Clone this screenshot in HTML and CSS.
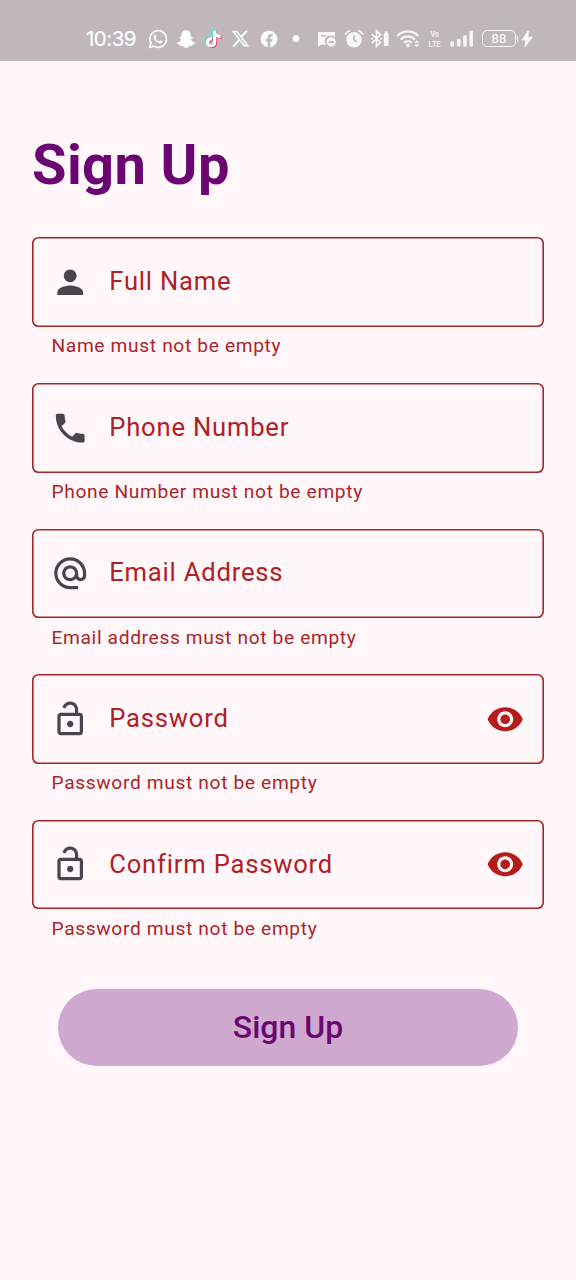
FILE: index.html
```html
<!DOCTYPE html>
<html lang="en">
<head>
<meta charset="utf-8">
<title>Sign Up</title>
<link rel="stylesheet" href="styles.css">
</head>
<body>
<svg class="defs" width="0" height="0">
  <symbol id="lock" viewBox="0 0 24 24"><path d="M12 17c1.1 0 2-.9 2-2s-.9-2-2-2-2 .9-2 2 .9 2 2 2zm6-9h-1V6c0-2.76-2.24-5-5-5-2.28 0-4.27 1.54-4.84 3.75l1.94.49C9.44 3.93 10.63 3 12 3c1.65 0 3 1.35 3 3v2H6c-1.1 0-2 .9-2 2v10c0 1.1.9 2 2 2h12c1.1 0 2-.9 2-2V10c0-1.1-.9-2-2-2zm0 12H6V10h12v10z"/></symbol>
  <symbol id="eye" viewBox="0 0 24 24"><path d="M12 4.5C7 4.5 2.73 7.61 1 12c1.73 4.39 6 7.5 11 7.5s9.27-3.11 11-7.5c-1.73-4.39-6-7.5-11-7.5zM12 17c-2.76 0-5-2.24-5-5s2.24-5 5-5 5 2.24 5 5-2.24 5-5 5zm0-8c-1.66 0-3 1.34-3 3s1.34 3 3 3 3-1.34 3-3-1.34-3-3-3z"/></symbol>
  <symbol id="note" viewBox="0 0 24 24"><path d="M12.5 1h4.1c.1 1.8.8 3.4 2.1 4.6 1.2 1 2.6 1.6 4.1 1.7v4c-2.200-.2-4-.8-5.900-2.100v7.500c0 4-3 7-7 7S3 20.700 3 16.800c0-4.200 3.600-7.300 7.900-6.800v4.200c-2-.4-3.700.8-3.700 2.600 0 1.700 1.200 2.900 2.800 2.900s2.800-1.300 2.500-3.200z"/></symbol>
</svg>

<header class="status">
  <span class="clock">10:39</span>
  <div class="group apps">
    <svg viewBox="0 0 24 24" width="20" height="20"><path fill="none" stroke="#fff" stroke-width="2" d="M2 22l1.500-5.200A10 10 0 1 1 7.200 20.600z"/><path d="M8.200 6.500c-1 .5-1.700 1.500-1.500 2.900.5 3.700 4 7.100 7.700 8 1.600.3 2.900-.7 3.100-2.300l-2.900-1.500-1.300 1.500c-1.900-.8-3.400-2.200-4.200-4.100l1-1.200-1.100-3z"/></svg>
    <svg viewBox="0 0 24 24" width="20" height="20"><path d="M12 1.500c3.500 0 5.800 2.400 5.800 6v2.200c.8.200 1.700-.5 2.200.2.500.9-.5 1.400-2 2 .5 2.300 2.300 4.100 4.800 4.700.8.900-.9 1.600-2.600 1.900l-.5 1.600c-1.900-.3-2.900-.1-4.200 1-1.200 1-2.200 1.500-3.500 1.500s-2.300-.5-3.500-1.500c-1.300-1.100-2.300-1.300-4.200-1l-.5-1.600c-1.700-.3-3.400-1-2.600-1.900 2.500-.6 4.300-2.400 4.800-4.700-1.500-.6-2.500-1.100-2-2 .5-.7 1.400 0 2.200-.2V7.500c0-3.600 2.300-6 5.800-6z"/></svg>
    <svg viewBox="0 0 24 24" width="20" height="20"><g transform="translate(1 1.200) scale(.88)"><use href="#note" width="24" height="24" x="-1.400" y="-1" fill="#47e0d8"/><use href="#note" width="24" height="24" x="1.400" y="1" fill="#ee3d70"/><use href="#note" width="24" height="24"/></g></svg>
    <svg viewBox="0 0 24 24" width="19" height="19"><path d="M18.200 2.200h3.400l-7.300 8.300L22.900 22h-6.800l-5.200-6.900L4.800 22H1.400l7.800-8.900L1 2.200h6.900l4.700 6.200zM17 20h1.900L7 4.100H5z"/></svg>
    <svg viewBox="0 0 24 24" width="20" height="20"><path d="M22 12a10 10 0 1 0-11.600 9.900v-7H7.900V12h2.500V9.800c0-2.500 1.500-3.900 3.800-3.900 1.100 0 2.200.2 2.200.2v2.500h-1.200c-1.200 0-1.600.8-1.600 1.500V12h2.700l-.4 2.900h-2.300v7A10 10 0 0 0 22 12z"/></svg>
    <svg viewBox="0 0 20 20" width="20" height="20"><circle cx="10" cy="9.600" r="3.300"/></svg>
  </div>
  <div class="group system">
    <svg viewBox="0 0 20 20" width="20" height="20"><path fill-rule="evenodd" d="M1 3h17v5.200a5.600 5.600 0 0 0-8.800 7.600H4.200L1 17.500zm3 3v1.500h5V6zm8 0v1.200h3V6z"/><path fill-rule="evenodd" d="M14.200 8.300a4.700 4.700 0 1 1 0 9.400 4.700 4.700 0 0 1 0-9.400zm-2.700 3.900v1.700h5.400v-1.700z"/></svg>
    <svg viewBox="0 0 20 20" width="20" height="20"><path fill-rule="evenodd" d="M10 3a7.700 7.700 0 1 1 0 15.400A7.700 7.700 0 0 1 10 3zm-.7 3.500v4.800l3.500 2.300.8-1.200-2.800-1.800V6.500z"/><path fill="none" stroke="#f8f6f7" stroke-width="1.700" stroke-linecap="round" d="M1.500 5Q3 2.500 5.500 1.700M18.500 5Q17 2.500 14.500 1.700"/></svg>
    <svg viewBox="0 0 20 20" width="20" height="20"><path fill="none" stroke="#f8f6f7" stroke-width="1.700" d="M.8 5.200l8.700 8.300-4 4V1.800l4 4-8.700 8.300"/><path d="M12.800 4.200h1V2.500h2.700v1.700h1V17h-4.700z"/><circle cx="1" cy="9.700" r="1"/><circle cx="10" cy="9.700" r="1"/></svg>
    <svg viewBox="0 0 24 20" width="24" height="20"><g fill="none" stroke="#f8f6f7" stroke-width="2.100"><path d="M1.300 7a14.300 14.300 0 0 1 21 0M4.600 10.500a9.800 9.800 0 0 1 14.400 0M8 13.800a5.300 5.300 0 0 1 7.700 0"/></g><circle cx="11.800" cy="16.300" r="1.900"/><path d="M18.300 14h5l-2.500-2.700zM18.300 15.500h5l-2.500 2.700z"/></svg>
    <span class="volte">Vo<br>LTE</span>
    <svg viewBox="0 0 24 20" width="24" height="20"><rect x=".5" y="12.500" width="3.500" height="5" rx=".8"/><rect x="7" y="10" width="3.500" height="7.500" rx=".8"/><rect x="13.200" y="6.500" width="3.500" height="11" rx=".8"/><rect x="19.400" y="1.800" width="3.500" height="15.700" rx=".8"/></svg>
  </div>
  <div class="battery"><span class="cell">88</span><i class="tip"></i></div>
  <svg class="bolt" viewBox="0 0 12 18" width="12" height="18"><path d="M7.200 1L.8 10h4L3.800 17 11.300 7.300H7z" stroke="#f8f6f7" stroke-width=".8"/></svg>
</header>

<main class="page">
  <h1 class="title">Sign Up</h1>
  <form class="form">
    <div class="field">
      <div class="box">
        <svg class="icon" viewBox="0 0 24 24"><path d="M12 12c2.210 0 4-1.790 4-4s-1.790-4-4-4-4 1.790-4 4 1.790 4 4 4zm0 2c-2.670 0-8 1.340-8 4v2h16v-2c0-2.660-5.330-4-8-4z"/></svg>
        <span class="label">Full Name</span>
      </div>
      <p class="error">Name must not be empty</p>
    </div>
    <div class="field">
      <div class="box">
        <svg class="icon" viewBox="0 0 24 24"><path d="M6.620 10.790c1.440 2.830 3.760 5.140 6.590 6.590l2.200-2.200c.27-.27.67-.36 1.020-.24 1.120.37 2.330.57 3.570.57.55 0 1 .45 1 1V20c0 .55-.45 1-1 1-9.390 0-17-7.610-17-17 0-.55.45-1 1-1h3.500c.55 0 1 .45 1 1 0 1.250.2 2.450.57 3.570.11.35.03.74-.25 1.020z"/></svg>
        <span class="label">Phone Number</span>
      </div>
      <p class="error">Phone Number must not be empty</p>
    </div>
    <div class="field">
      <div class="box">
        <svg class="icon" viewBox="0 0 24 24"><path d="M12 2C6.480 2 2 6.480 2 12s4.480 10 10 10h5v-2h-5c-4.340 0-8-3.660-8-8s3.660-8 8-8 8 3.660 8 8v1.430c0 .79-.71 1.570-1.500 1.570s-1.500-.78-1.500-1.570V12c0-2.760-2.240-5-5-5s-5 2.240-5 5 2.240 5 5 5c1.380 0 2.640-.56 3.540-1.470.65.890 1.770 1.470 2.960 1.470 1.970 0 3.500-1.600 3.500-3.570V12c0-5.520-4.480-10-10-10zm0 13c-1.660 0-3-1.340-3-3s1.340-3 3-3 3 1.340 3 3-1.340 3-3 3z"/></svg>
        <span class="label">Email Address</span>
      </div>
      <p class="error">Email address must not be empty</p>
    </div>
    <div class="field">
      <div class="box">
        <svg class="icon"><use href="#lock"/></svg>
        <span class="label">Password</span>
        <svg class="icon toggle"><use href="#eye"/></svg>
      </div>
      <p class="error">Password must not be empty</p>
    </div>
    <div class="field">
      <div class="box">
        <svg class="icon"><use href="#lock"/></svg>
        <span class="label">Confirm Password</span>
        <svg class="icon toggle"><use href="#eye"/></svg>
      </div>
      <p class="error">Password must not be empty</p>
    </div>
    <button class="submit" type="button">Sign Up</button>
  </form>
</main>
</body>
</html>
```

FILE: styles.css
```css
* { box-sizing: border-box; }

body {
  margin: 0;
  min-height: 1280px;
  background: #fff7fa;
  font-family: Roboto, "Liberation Sans", sans-serif;
}

.defs { position: absolute; }

.status {
  display: flex;
  align-items: center;
  height: 61px;
  padding: 16px 0 0 86px;
  background: #bfb7ba;
  color: #fff;
}

.status svg { fill: #fff; flex: none; }

.clock {
  width: 58px;
  font: 400 20.500px/24px Inter, Roboto, sans-serif;
  letter-spacing: -0.500px;
  white-space: nowrap;
  -webkit-text-stroke: 0.200px #fff;
}

.group { display: grid; align-items: center; justify-items: center; }
.apps { grid-template-columns: repeat(6, 27.700px); }
.system { grid-template-columns: repeat(6, 27px); margin-left: 3.300px; }
.status .system svg, .status .bolt { fill: #f8f6f7; }

.volte {
  color: #f8f6f7;
  font: 700 8.500px/10px "Liberation Sans", sans-serif;
  text-align: center;
  transform: scale(0.800, 1.050);
}

.battery { display: flex; align-items: center; margin-left: 6.500px; }

.cell {
  width: 34px;
  height: 17px;
  border: 1px solid #f8f6f7;
  border-radius: 5px;
  font: 400 13px/15px Roboto, sans-serif;
  text-align: center;
}

.tip { width: 1px; height: 6px; margin-left: 1px; background: #f8f6f7; }
.bolt { margin-left: 3px; }

.page { padding: 71px 32px 0; }

.title {
  margin: 0 0 39.400px;
  color: #6a0572;
  font-size: 56px;
  font-weight: 700;
  line-height: 66px;
  letter-spacing: 0.400px;
}

.form { display: flex; flex-direction: column; }

.field { height: 145.600px; }

.box {
  display: flex;
  align-items: center;
  height: 89.600px;
  padding: 0 19.200px;
  border-radius: 6.400px;
  box-shadow: inset 0 0 0 1.600px #a3262b;
}

.icon { width: 38.400px; height: 38.400px; flex: none; fill: #49454c; }
.toggle { margin-left: auto; fill: #b71c1c; }

.label {
  margin-left: 19.700px;
  padding-bottom: 1.800px;
  color: #b02024;
  font-size: 25.600px;
  line-height: 30px;
  letter-spacing: 0.800px;
}

.error {
  margin: 6.400px 0 0 19.500px;
  color: #ab2529;
  font-size: 19.200px;
  line-height: 25.600px;
  letter-spacing: 0.640px;
}

.submit {
  height: 77px;
  margin: 23.600px 25.600px 0;
  padding: 0;
  border: 0;
  border-radius: 39px;
  background: #cfa9d0;
  color: #6a0572;
  font: 500 32px/38px Roboto, sans-serif;
}
```
